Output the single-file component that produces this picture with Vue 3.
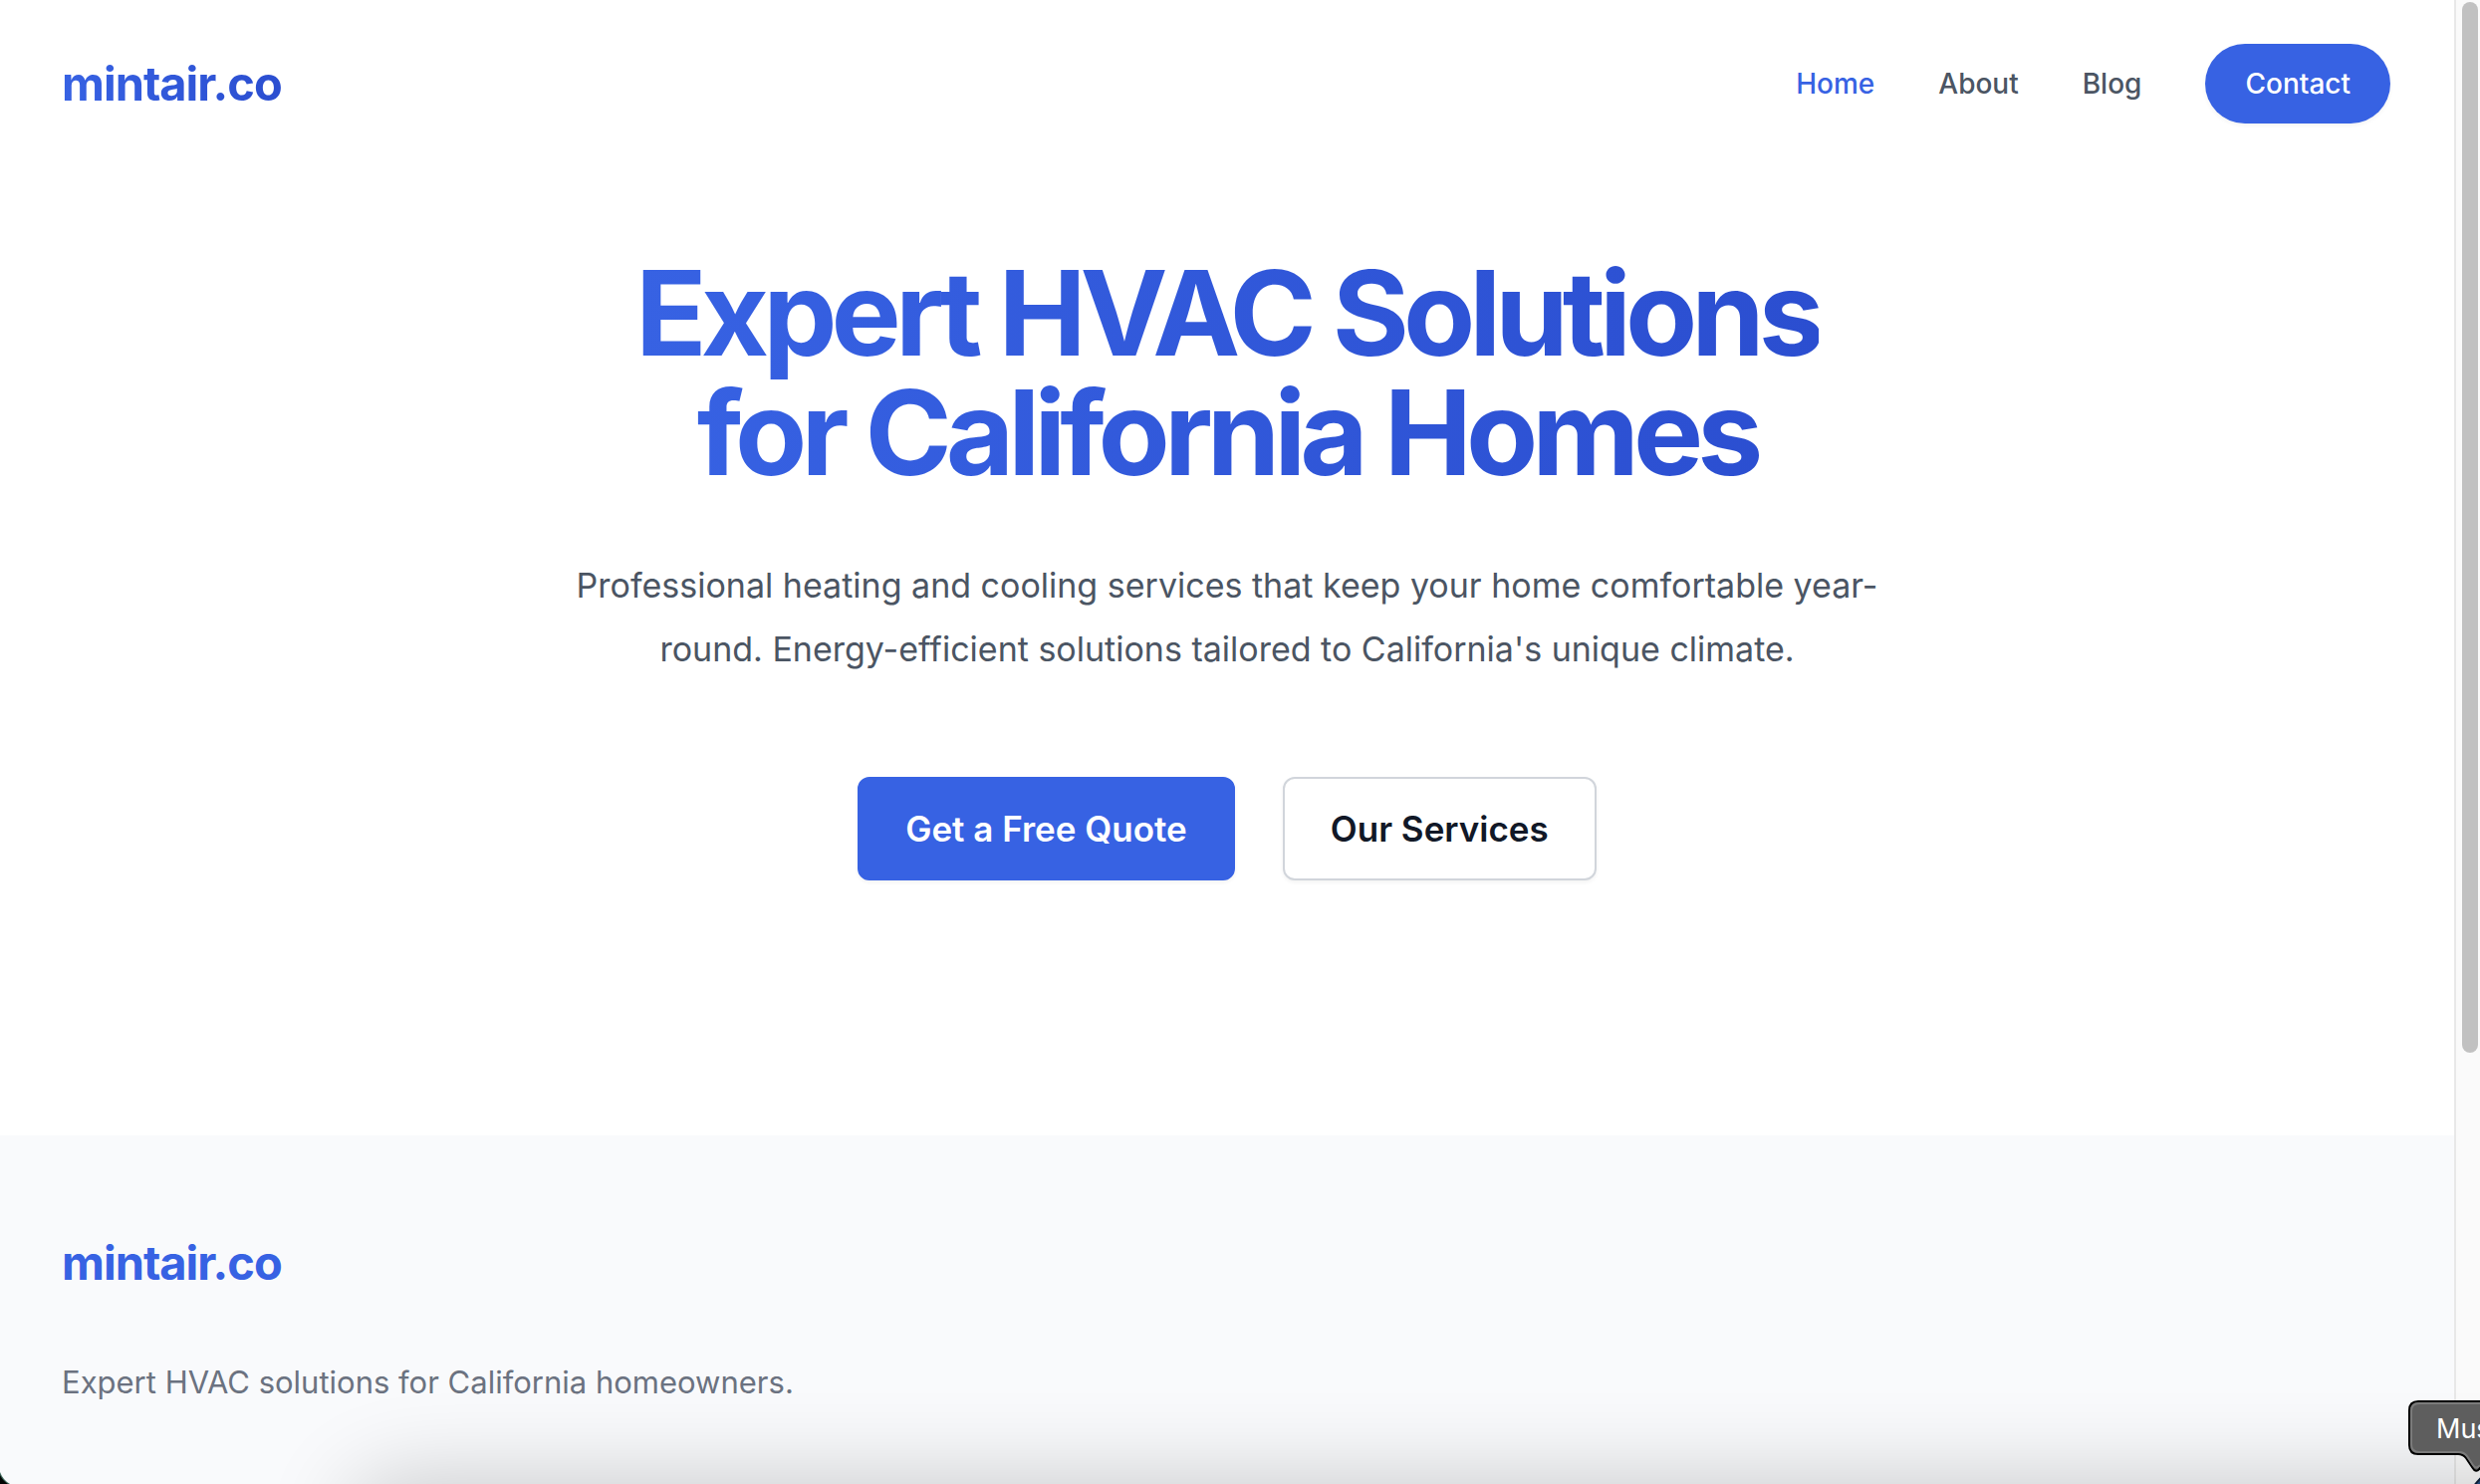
<script setup>
const links = [
  { label: 'Home', active: true },
  { label: 'About', active: false },
  { label: 'Blog', active: false },
]
</script>

<template>
  <div class="window">
    <div class="page">
      <header class="header">
        <a class="logo gradient-text" href="#">mintair.co</a>
        <nav class="nav">
          <a
            v-for="link in links"
            :key="link.label"
            href="#"
            :class="['nav-link', { active: link.active }]"
          >{{ link.label }}</a>
          <a class="contact" href="#">Contact</a>
        </nav>
      </header>

      <main class="hero">
        <h1 class="title gradient-text">Expert HVAC Solutions<br />for California Homes</h1>
        <p class="lead">
          Professional heating and cooling services that keep your home comfortable year-round.
          Energy-efficient solutions tailored to California's unique climate.
        </p>
        <div class="actions">
          <button class="button primary" type="button">Get a Free Quote</button>
          <button class="button secondary" type="button">Our Services</button>
        </div>
      </main>

      <footer class="footer">
        <a class="logo" href="#">mintair.co</a>
        <p class="tagline">Expert HVAC solutions for California homeowners.</p>
      </footer>
    </div>

    <div class="scrollbar"><div class="thumb"></div></div>

    <div class="dock-shadow"></div>
    <svg class="corner" width="10" height="12" viewBox="0 0 10 12" aria-hidden="true">
      <path d="M0 0Q3 8 10 12H0Z" fill="#3f6a5c" />
      <path d="M0 3Q3 9 8 12H0Z" fill="#020504" />
    </svg>
    <div class="tooltip">
      <svg class="bubble" width="72" height="84" viewBox="0 0 72 84" aria-hidden="true">
        <circle cx="104" cy="112" r="46" fill="#1d4474" stroke="#0c1c33" stroke-width="2" />
        <path
          d="M80 1H10Q1 1 1 10V45Q1 54 10 54H50Q55 54 58 58L64 67Q68 74 72 68L80 60"
          fill="#5e5e5e" stroke="#000" stroke-width="2"
        />
        <path
          d="M80 3H11Q3 3 3 11V44Q3 52 11 52H51Q56 52 59 56L65 65Q68 70 72 65"
          fill="none" stroke="#7b7b7b" stroke-width="2"
        />
      </svg>
      <span class="tooltip-text">Music</span>
    </div>
  </div>
</template>

<style>
html,
body {
  margin: 0;
  background: #fff;
}
</style>

<style scoped>
.window {
  position: relative;
  display: flex;
  min-height: 100vh;
  overflow: hidden;
  font-family: Inter, "Liberation Sans", sans-serif;
  color: #111827;
}

.page {
  flex: 1;
  display: flex;
  flex-direction: column;
}

a {
  text-decoration: none;
}

.header {
  display: flex;
  align-items: center;
  justify-content: space-between;
  padding: 44px 64px 44px 62px;
}

.logo {
  font-size: 47px;
  line-height: 64px;
  font-weight: 700;
  letter-spacing: -1px;
  color: #3762e3;
}

.gradient-text {
  color: transparent;
  background: linear-gradient(to right, #3762e3, #2b4ed0);
  background-clip: text;
  -webkit-background-clip: text;
}

.nav {
  display: flex;
  align-items: center;
  gap: 64px;
  font-size: 28px;
  line-height: 40px;
  font-weight: 500;
}

.nav-link {
  color: #4b5563;
}

.nav-link.active {
  color: #3762e3;
}

.contact {
  padding: 20px 40px;
  border-radius: 40px;
  background: #3762e3;
  color: #fff;
  box-shadow: 0 2px 4px rgba(0, 0, 0, 0.05);
}

.hero {
  display: flex;
  flex-direction: column;
  align-items: center;
  padding: 86px 64px 256px;
  text-align: center;
}

.title {
  margin: 0;
  padding-bottom: 8px;
  font-size: 118px;
  line-height: 120px;
  font-weight: 700;
  letter-spacing: -6px;
}

.lead {
  max-width: 1344px;
  margin: 54px 0 96px;
  font-size: 34px;
  line-height: 64px;
  color: #4b5563;
}

.actions {
  display: flex;
  gap: 48px;
}

.button {
  box-sizing: border-box;
  height: 104px;
  padding: 0 46px;
  border: 2px solid;
  border-radius: 12px;
  font-family: inherit;
  font-size: 35px;
  font-weight: 600;
  box-shadow: 0 2px 4px rgba(0, 0, 0, 0.05);
}

.primary {
  border-color: #3762e3;
  background: #3762e3;
  color: #fff;
}

.secondary {
  border-color: #d1d5db;
  background: #fff;
  color: #111827;
}

.footer {
  flex: 1;
  display: flex;
  flex-direction: column;
  align-items: flex-start;
  padding: 96px 62px 0;
  background: #f9fafc;
}

.tagline {
  margin: 64px 0 0;
  font-size: 31px;
  line-height: 48px;
  color: #6b7280;
}

.scrollbar {
  box-sizing: border-box;
  width: 26px;
  padding: 2px 2px 2px 6px;
  border-left: 2px solid #e8e8e8;
  background: #fafafa;
}

.thumb {
  height: 71%;
  border-radius: 8px;
  background: #c1c1c1;
}

.dock-shadow {
  position: absolute;
  left: 360px;
  right: -200px;
  bottom: -86px;
  height: 80px;
  border-radius: 40px;
  box-shadow: 0 0 90px 10px rgba(0, 0, 0, 0.2);
}

.corner {
  position: absolute;
  left: 0;
  bottom: 0;
}

.tooltip {
  position: absolute;
  right: 0;
  bottom: 0;
  width: 72px;
  height: 84px;
  overflow: hidden;
}

.bubble {
  display: block;
}

.tooltip-text {
  position: absolute;
  left: 28px;
  top: 13px;
  font-size: 27px;
  line-height: 32px;
  color: #fff;
}
</style>
